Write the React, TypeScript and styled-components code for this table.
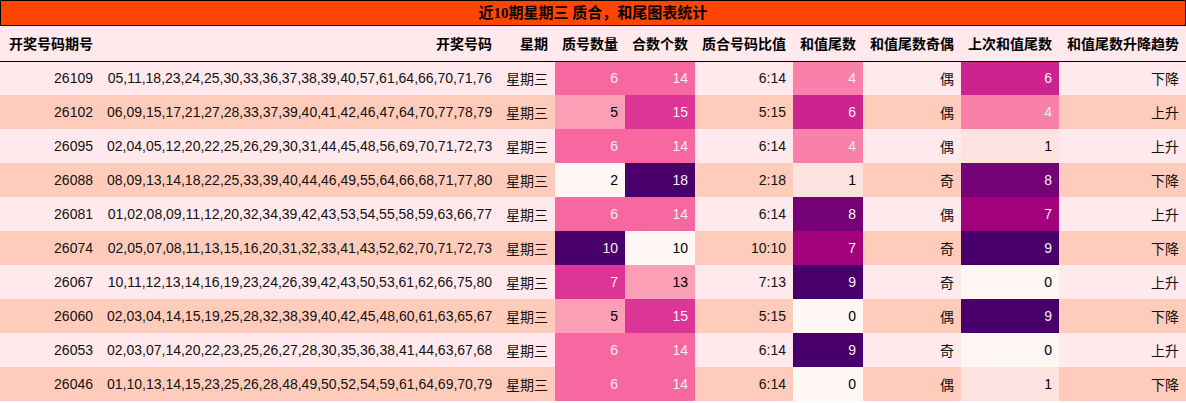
import styled, { createGlobalStyle } from 'styled-components';

type Draw = {
  issue: string;
  numbers: string;
  prime: number;
  composite: number;
  tail: number;
  parity: string;
  lastTail: number;
  trend: string;
};

const DRAWS: Draw[] = [
  { issue: '26109', numbers: '05,11,18,23,24,25,30,33,36,37,38,39,40,57,61,64,66,70,71,76', prime: 6, composite: 14, tail: 4, parity: '偶', lastTail: 6, trend: '下降' },
  { issue: '26102', numbers: '06,09,15,17,21,27,28,33,37,39,40,41,42,46,47,64,70,77,78,79', prime: 5, composite: 15, tail: 6, parity: '偶', lastTail: 4, trend: '上升' },
  { issue: '26095', numbers: '02,04,05,12,20,22,25,26,29,30,31,44,45,48,56,69,70,71,72,73', prime: 6, composite: 14, tail: 4, parity: '偶', lastTail: 1, trend: '上升' },
  { issue: '26088', numbers: '08,09,13,14,18,22,25,33,39,40,44,46,49,55,64,66,68,71,77,80', prime: 2, composite: 18, tail: 1, parity: '奇', lastTail: 8, trend: '下降' },
  { issue: '26081', numbers: '01,02,08,09,11,12,20,32,34,39,42,43,53,54,55,58,59,63,66,77', prime: 6, composite: 14, tail: 8, parity: '偶', lastTail: 7, trend: '上升' },
  { issue: '26074', numbers: '02,05,07,08,11,13,15,16,20,31,32,33,41,43,52,62,70,71,72,73', prime: 10, composite: 10, tail: 7, parity: '奇', lastTail: 9, trend: '下降' },
  { issue: '26067', numbers: '10,11,12,13,14,16,19,23,24,26,39,42,43,50,53,61,62,66,75,80', prime: 7, composite: 13, tail: 9, parity: '奇', lastTail: 0, trend: '上升' },
  { issue: '26060', numbers: '02,03,04,14,15,19,25,28,32,38,39,40,42,45,48,60,61,63,65,67', prime: 5, composite: 15, tail: 0, parity: '偶', lastTail: 9, trend: '下降' },
  { issue: '26053', numbers: '02,03,07,14,20,22,23,25,26,27,28,30,35,36,38,41,44,63,67,68', prime: 6, composite: 14, tail: 9, parity: '奇', lastTail: 0, trend: '上升' },
  { issue: '26046', numbers: '01,10,13,14,15,23,25,26,28,48,49,50,52,54,59,61,64,69,70,79', prime: 6, composite: 14, tail: 0, parity: '偶', lastTail: 1, trend: '下降' },
];

// RdPu colour map stops
const RDPU = ['#fff7f3', '#fde0dd', '#fcc5c0', '#fa9fb5', '#f768a1', '#dd3497', '#ae017e', '#7a0177', '#49006a'];

const hex = (c: string) => [1, 3, 5].map((i) => parseInt(c.slice(i, i + 2), 16));

const shade = (v: number, min: number, max: number) => {
  const t = max === min ? 0 : (v - min) / (max - min);
  const pos = t * (RDPU.length - 1);
  const i = Math.min(Math.floor(pos), RDPU.length - 2);
  const f = pos - i;
  const a = hex(RDPU[i]);
  const b = hex(RDPU[i + 1]);
  const rgb = a.map((x, k) => Math.round(x + (b[k] - x) * f));
  const lum = rgb
    .map((x) => {
      const s = x / 255;
      return s <= 0.03928 ? s / 12.92 : Math.pow((s + 0.055) / 1.055, 2.4);
    })
    .reduce((acc, s, k) => acc + s * [0.2126, 0.7152, 0.0722][k], 0);
  return { bg: `rgb(${rgb.join(',')})`, fg: lum < 0.408 ? '#f1f1f1' : '#000' };
};

const range = (key: keyof Draw, key2?: keyof Draw) => {
  const vals = DRAWS.flatMap((d) => [d[key] as number, ...(key2 ? [d[key2] as number] : [])]);
  return [Math.min(...vals), Math.max(...vals)];
};

const COLS = [100, 399, 56, 70, 70, 98, 70, 98, 98, 127];
const HEADS = ['开奖号码期号', '开奖号码', '星期', '质号数量', '合数个数', '质合号码比值', '和值尾数', '和值尾数奇偶', '上次和值尾数', '和值尾数升降趋势'];

const GlobalStyle = createGlobalStyle`
  body {
    margin: 0;
    background: #fff;
    font-family: "Liberation Sans", "Noto Sans CJK SC", sans-serif;
  }
`;

const Title = styled.div`
  height: 24px;
  border: 1px solid #000;
  background: #ff4500;
  color: #000;
  font-family: "Liberation Serif", "Noto Sans CJK SC", serif;
  font-size: 15px;
  font-weight: bold;
  line-height: 24px;
  text-align: center;
`;

const Table = styled.table`
  width: 1186px;
  table-layout: fixed;
  border-collapse: collapse;
  font-size: 14px;
`;

const HeadRow = styled.tr`
  height: 35px;
  background: #ffe9ec;
  border-bottom: 1px solid #000;
`;

const Th = styled.th`
  padding: 0 7px;
  text-align: right;
  font-weight: bold;
  color: #000;
  white-space: nowrap;
`;

const Row = styled.tr<{ $odd: boolean }>`
  height: 34px;
  background: ${(p) => (p.$odd ? '#ffccbb' : '#ffe9ec')};
`;

const Td = styled.td`
  padding: 0 7px;
  text-align: right;
  color: #111;
  white-space: nowrap;
`;

const HeatTd = styled(Td)<{ $bg: string; $fg: string }>`
  background: ${(p) => p.$bg};
  color: ${(p) => p.$fg};
`;

export default function App() {
  const [pMin, pMax] = range('prime');
  const [cMin, cMax] = range('composite');
  const [tMin, tMax] = range('tail');
  const [lMin, lMax] = range('lastTail');

  const heat = (v: number, min: number, max: number) => {
    const s = shade(v, min, max);
    return (
      <HeatTd $bg={s.bg} $fg={s.fg}>
        {v}
      </HeatTd>
    );
  };

  return (
    <>
      <GlobalStyle />
      <Title>近10期星期三 质合，和尾图表统计</Title>
      <Table>
        <colgroup>
          {COLS.map((w, i) => (
            <col key={i} style={{ width: w }} />
          ))}
        </colgroup>
        <thead>
          <HeadRow>
            {HEADS.map((h) => (
              <Th key={h}>{h}</Th>
            ))}
          </HeadRow>
        </thead>
        <tbody>
          {DRAWS.map((d, i) => (
            <Row key={d.issue} $odd={i % 2 === 1}>
              <Td>{d.issue}</Td>
              <Td>{d.numbers}</Td>
              <Td>星期三</Td>
              {heat(d.prime, pMin, pMax)}
              {heat(d.composite, cMin, cMax)}
              <Td>{`${d.prime}:${d.composite}`}</Td>
              {heat(d.tail, tMin, tMax)}
              <Td>{d.parity}</Td>
              {heat(d.lastTail, lMin, lMax)}
              <Td>{d.trend}</Td>
            </Row>
          ))}
        </tbody>
      </Table>
    </>
  );
}
